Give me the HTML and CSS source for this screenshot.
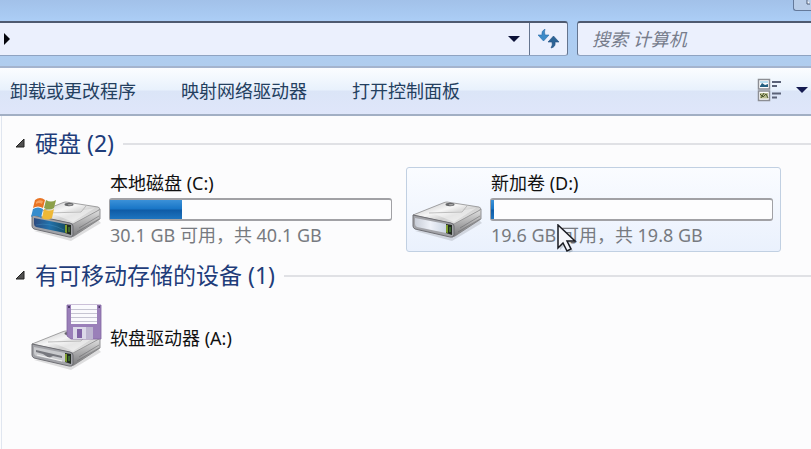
FILE: index.html
```html
<!DOCTYPE html>
<html lang="zh-CN">
<head>
    <meta charset="UTF-8">
    <meta name="viewport" content="width=device-width, initial-scale=1.0">
    <title>计算机</title>
    <link rel="stylesheet" href="styles.css">
</head>
<body>
    <!-- shared drive body, reused by every drive icon -->
    <svg class="defs" width="0" height="0" aria-hidden="true">
        <defs>
            <linearGradient id="lid" x1="0" y1="0" x2="1" y2="1">
                <stop offset="0" stop-color="#b9b9bb"/>
                <stop offset="0.4" stop-color="#f6f6f6"/>
                <stop offset="0.6" stop-color="#d0d0d0"/>
                <stop offset="1" stop-color="#f4f4f4"/>
            </linearGradient>
            <linearGradient id="side" x1="0" y1="0" x2="0" y2="1">
                <stop offset="0" stop-color="#e2e2e2"/>
                <stop offset="1" stop-color="#777779"/>
            </linearGradient>
            <linearGradient id="glass" x1="0" y1="0" x2="1" y2="0">
                <stop offset="0" stop-color="#c9ced8"/>
                <stop offset="0.5" stop-color="#eef1f8"/>
                <stop offset="1" stop-color="#cbd5e2"/>
            </linearGradient>
            <linearGradient id="blueGlass" x1="0" y1="0" x2="1" y2="0">
                <stop offset="0" stop-color="#2c4b80"/>
                <stop offset="0.5" stop-color="#2272ac"/>
                <stop offset="1" stop-color="#174f68"/>
            </linearGradient>
            <g id="drive">
                <path d="M3 58L40 68L70 50L66 46Z" fill="#000" opacity="0.12"/>
                <path d="M41 50L69 36V46L43 63L40 64Z" fill="url(#side)" stroke="#7c7c7e" stroke-width="0.8"/>
                <path d="M48 55L68 43M46 59L68 46" stroke="#66666a" stroke-width="0.9" opacity="0.6"/>
                <path d="M1 42L31 30Q33 29 35 29L67 34Q70 35 68 37L42 51Z" fill="url(#lid)" stroke="#8b8b8d" stroke-width="0.8"/>
                <path d="M20 40L48 38L64 35L42 49Z" fill="#fff" opacity="0.45"/>
                <path d="M17 40L50 39L55 33" fill="none" stroke="#999" stroke-width="0.6"/>
                <ellipse cx="38" cy="31.500" rx="4.500" ry="1.700" fill="#66676a"/>
                <ellipse cx="39" cy="31.800" rx="2.500" ry="0.800" fill="#aaa"/>
                <path d="M1 42L39 50Q42 51 42 53V62Q41 65 38 64L3 56Q1 55 1 53Z" fill="#a2a3a8" stroke="#66676c" stroke-width="0.9"/>
            </g>
            <g id="light">
                <path d="M34 51L40 52V62L34 60Z" fill="#232b22"/>
                <path d="M34 52L36 52V60L34 59.500Z" fill="#7d9c2d"/>
                <path d="M38 54V59" stroke="#5fbf4a" stroke-width="0.8"/>
            </g>
        </defs>
    </svg>

    <div class="explorer">
        <header class="frame">
            <div class="titlebar">
                <button class="window-button" type="button" aria-label="最小化">
                    <svg width="14" height="10" viewBox="0 0 14 10"><path d="M11 0V4H14" fill="#fff" stroke="#4b5b74"/></svg>
                </button>
            </div>
            <div class="navigation">
                <div class="address">
                    <button class="crumb" type="button" aria-label="位置">
                        <svg width="6" height="12" viewBox="0 0 6 12"><path d="M0 0L6 6L0 12Z" fill="#05060c"/></svg>
                    </button>
                    <button class="history" type="button" aria-label="以前的位置">
                        <svg width="12" height="6" viewBox="0 0 12 6"><path d="M0 0H12L6 6Z" fill="#0c1238"/></svg>
                    </button>
                    <button class="refresh" type="button" aria-label="刷新">
                        <svg width="22" height="20" viewBox="0 0 22 20">
                            <path d="M7 0Q3 2 4 6H0L5.500 12L11 6H7Q6 3 7 0Z" fill="#3d8bc9" stroke="#2a6da8" stroke-width="0.6"/>
                            <path d="M13 19Q18 18 17 13H21L15.500 7L10 13H14Q15 16 13 19Z" fill="#2c6496" stroke="#224f80" stroke-width="0.6"/>
                        </svg>
                    </button>
                </div>
                <input class="search" type="search" placeholder="搜索 计算机" aria-label="搜索 计算机">
            </div>
        </header>

        <div class="toolbar">
            <button class="command" type="button">卸载或更改程序</button>
            <button class="command" type="button">映射网络驱动器</button>
            <button class="command" type="button">打开控制面板</button>
            <button class="view" type="button" aria-label="更改您的视图">
                <svg width="25" height="24" viewBox="0 0 25 24">
                    <path d="M1.500 1.500H12.500V11H1.500ZM1.500 13H12.500V22.500H1.500Z" fill="#fff" stroke="#8c8e94" stroke-width="1.500"/>
                    <path d="M3 3H11V5H3Z" fill="#b9def0"/>
                    <path d="M3 8L5 5L8 7L11 6V9H3Z" fill="#246080"/>
                    <path d="M3 15H11V20.500H3Z" fill="#b9bd91"/>
                    <path d="M3 16L6 19L9 16L11 20M7 15L4 20" stroke="#4e592d" fill="none"/>
                    <path d="M15 4H24M15 8H20M15 15.500H24M15 19.500H20" stroke="#5b6278" stroke-width="2"/>
                </svg>
            </button>
            <button class="view-menu" type="button" aria-label="更多选项">
                <svg width="12" height="6" viewBox="0 0 12 6"><path d="M0 0H12L6 6Z" fill="#151b50"/></svg>
            </button>
        </div>

        <main class="content">
            <section class="group">
                <h2 class="group-title">
                    <button class="toggle" type="button" aria-expanded="true">
                        <svg width="10" height="10" viewBox="0 0 10 10"><path d="M9 1V9H1Z" fill="#505050" stroke="#222"/></svg>
                        <span>硬盘 (2)</span>
                    </button>
                </h2>
                <ul class="drives">
                    <li class="drive">
                        <svg class="drive-icon" viewBox="0 0 72 72">
                            <use href="#drive"/>
                            <path d="M3 45L34 51V60L5 54Q3 53 3 51Z" fill="url(#blueGlass)"/>
                            <path d="M5 52Q18 49 33 57" stroke="#58a7cf" fill="none" opacity="0.3"/>
                            <use href="#light"/>
                            <path d="M4 27Q9 23 14 27L12 35Q7 32 2 35Z" fill="#e87424"/>
                            <path d="M15 27Q20 30 25 27L23 35Q18 38 13 35Z" fill="#8ca04a"/>
                            <path d="M2 36Q7 33 12 36L10 45Q5 41 0 44Z" fill="#368dcd"/>
                            <path d="M13 36Q18 39 23 36L21 45Q16 48 11 45Z" fill="#eeb837"/>
                            <path d="M5 29Q8 26 12 28L11 31Q8 29 5 31Z" fill="#ffc188" opacity="0.6"/>
                        </svg>
                        <div class="info">
                            <span class="name">本地磁盘 (C:)</span>
                            <div class="bar"><div class="fill" style="width: 25.5%"></div></div>
                            <span class="space">30.1 GB 可用，共 40.1 GB</span>
                        </div>
                    </li>
                    <li class="drive hover">
                        <svg class="drive-icon" viewBox="0 0 72 72">
                            <use href="#drive"/>
                            <path d="M3 45L34 51V60L5 54Q3 53 3 51Z" fill="url(#glass)"/>
                            <use href="#light"/>
                        </svg>
                        <div class="info">
                            <span class="name">新加卷 (D:)</span>
                            <div class="bar"><div class="fill" style="width: 1%"></div></div>
                            <span class="space">19.6 GB 可用，共 19.8 GB</span>
                        </div>
                        <svg class="cursor" width="20" height="30" viewBox="0 0 20 30" aria-hidden="true">
                            <path d="M3 4V26L8 21L12 29L16 27L12 19H20Z" fill="#000" opacity="0.15"/>
                            <path d="M1 1V24L6 19L10 27L14 25L10 17H18Z" fill="#f6f7fc" stroke="#191b22" stroke-width="1.500"/>
                        </svg>
                    </li>
                </ul>
            </section>

            <section class="group">
                <h2 class="group-title">
                    <button class="toggle" type="button" aria-expanded="true">
                        <svg width="10" height="10" viewBox="0 0 10 10"><path d="M9 1V9H1Z" fill="#505050" stroke="#222"/></svg>
                        <span>有可移动存储的设备 (1)</span>
                    </button>
                </h2>
                <ul class="drives">
                    <li class="drive">
                        <svg class="drive-icon" viewBox="0 0 72 72">
                            <use href="#drive"/>
                            <path d="M3 45L34 51V60L5 54Q3 53 3 51Z" fill="#c9cacd"/>
                            <path d="M5 48L31 54V56L22 54L18 56L12 52L5 50Z" fill="#77787e"/>
                            <path d="M6 53L31 59" stroke="#f4f4f4"/>
                            <use href="#light"/>
                            <path d="M36 3H70V37H40L36 34Z" fill="#9a7fb9" stroke="#80669f" stroke-width="0.8"/>
                            <path d="M40 3H66V22H40Z" fill="#fafafd"/>
                            <path d="M40 7.500H66M40 11.500H66M40 15.500H66M40 19.500H66" stroke="#c6c5d2"/>
                            <path d="M37 5H39M67.500 5H69" stroke="#4c376a" stroke-width="2"/>
                            <path d="M42 25H62V37H42Z" fill="#dcd9e9"/>
                            <path d="M46 27H51V36H46Z" fill="#8163a6"/>
                            <path d="M55 25H62V37H55Z" fill="#bdb5d0"/>
                        </svg>
                        <div class="info">
                            <span class="name">软盘驱动器 (A:)</span>
                        </div>
                    </li>
                </ul>
            </section>
        </main>
    </div>
</body>
</html>
```
FILE: styles.css
```css
* {
    box-sizing: border-box;
}
body {
    margin: 0;
    background: #fcfcfd;
    font-family: "Noto Sans", "Noto Sans CJK SC", sans-serif;
    font-size: 18px;
    color: #111;
}
button {
    display: flex;
    align-items: center;
    justify-content: center;
    padding: 0;
    border: none;
    background: none;
    font: inherit;
    color: inherit;
}
svg {
    display: block;
    flex: none;
}
.defs {
    position: absolute;
}
.explorer {
    display: flex;
    flex-direction: column;
    min-height: 100vh;
    overflow: hidden;
}

/* window frame */
.frame {
    padding-bottom: 10px;
    background: linear-gradient(#a2c1e9, #abcdf5 20px, #b0cdee);
}
.titlebar {
    display: flex;
    justify-content: flex-end;
    height: 21px;
}
.window-button {
    width: 18px;
    height: 11px;
    border: 1px solid #64799a;
    border-top: none;
    border-right: none;
    border-radius: 0 0 0 3px;
    background: #b9cde8;
}
.navigation {
    display: flex;
    gap: 9px;
    height: 35px;
}
.address,
.search {
    border: 1px solid #8fa3c1;
    border-top: 2px solid #4e5a70;
    background: #ebf0fd;
}
.address {
    display: flex;
    flex: 1;
    border-left: none;
    border-right-color: #65758f;
    border-radius: 0 3px 3px 0;
}
.crumb {
    width: 14px;
}
.history {
    width: 30px;
    margin-left: auto;
}
.refresh {
    width: 38px;
    border-left: 1px solid #65758f;
}
.search {
    width: 234px;
    padding: 0 14px;
    border-left-color: #65758f;
    border-right: none;
    border-radius: 3px 0 0 3px;
    font: italic 18px "Noto Sans", "Noto Sans CJK SC", sans-serif;
}
.search::placeholder {
    color: #777d8c;
}

/* toolbar */
.toolbar {
    display: flex;
    align-items: center;
    height: 50px;
    padding: 0 3px 2px 10px;
    border-top: 2px solid #a4b4ce;
    border-bottom: 2px solid #a2afc4;
    background: linear-gradient(#fbfdff, #e8f1fc 22px, #dbe5f7 23px, #dfe6fa);
    color: #24405f;
}
.command {
    margin-right: 45px;
}
.view {
    margin-left: auto;
}
.view-menu {
    margin-left: 14px;
}

/* groups */
.content {
    flex: 1;
    margin-left: 1px;
    padding-top: 12px;
    border-left: 1px solid #e0e6f0;
}
.group-title {
    display: flex;
    align-items: center;
    gap: 9px;
    height: 32px;
    margin: 0 0 7px;
    padding-left: 13px;
    font-size: 23px;
    font-weight: 400;
    color: #1f3d7a;
}
.group-title::after {
    content: "";
    flex: 1;
    height: 2px;
    background: #e0e1e5;
}
.toggle {
    gap: 10px;
    line-height: 30px;
    padding-bottom: 2px;
}
.drives {
    display: grid;
    grid-template-columns: repeat(auto-fill, 375px);
    gap: 6px;
    margin: 0 0 8px;
    padding: 0 0 0 23px;
    list-style: none;
}
.drive {
    position: relative;
    display: flex;
    align-items: center;
    gap: 6px;
    padding: 2px 7px 3px 5px;
    border: 1px solid transparent;
    border-radius: 3px;
}
.drive.hover {
    border-color: #c1d0e2;
    background: linear-gradient(#fafcff, #eaf1fd);
}
.drive-icon {
    width: 72px;
    height: 72px;
}
.info {
    flex: 1;
    display: flex;
    flex-direction: column;
}
.name,
.space {
    padding-left: 1px;
    line-height: 26px;
}
.bar {
    height: 23px;
    margin: 2px 0 1px;
    border: 2px solid #a1a1a5;
    border-left-width: 1px;
    border-right-width: 1px;
    border-radius: 3px;
    background: #fdfdfe;
}
.fill {
    height: 100%;
    background: linear-gradient(#3b91d8, #1875c6 9px, #0f5ba6 10px, #1e74bf);
}
.space {
    color: #777a80;
}
.cursor {
    position: absolute;
    left: 150px;
    top: 56px;
}
```
